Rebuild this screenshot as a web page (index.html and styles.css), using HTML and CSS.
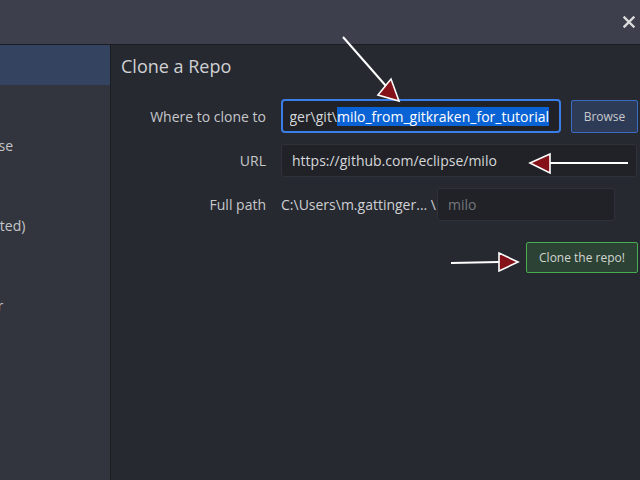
FILE: index.html
```html
<!DOCTYPE html>
<html>
<head>
<meta charset="utf-8">
<link rel="stylesheet" href="styles.css">
</head>
<body>
<div class="app">
  <div class="header">
    <svg class="close" width="12" height="12" viewBox="0 0 12 12"><path d="M1.5 1.5 L10.5 10.5 M10.5 1.5 L1.5 10.5" stroke="#dcdcdc" stroke-width="2.4" stroke-linecap="square"/></svg>
  </div>
  <div class="body">
    <div class="sidebar">
      <div class="nav-item selected"><span class="nav-label">Clone with URL</span></div>
      <div class="nav-item"><span class="nav-label">GitHub.com</span></div>
      <div class="nav-item"><span class="nav-label">GitHub Enterprise</span></div>
      <div class="nav-item"><span class="nav-label">GitLab.com</span></div>
      <div class="nav-item"><span class="nav-label">GitLab (Self-Hosted)</span></div>
      <div class="nav-item"><span class="nav-label">Bitbucket.org</span></div>
      <div class="nav-item"><span class="nav-label">Bitbucket Server</span></div>
    </div>
    <div class="main">
      <h1 class="title">Clone a Repo</h1>
      <div class="form">
        <div class="label">Where to clone to</div>
        <div class="field-row">
          <div class="input focused">
            <div class="scroll"><span>ger\git\</span><span class="sel">milo_from_gitkraken_for_tutorial</span></div>
          </div>
          <button class="btn browse">Browse</button>
        </div>
        <div class="label">URL</div>
        <div class="field-row">
          <div class="input plain"><div class="scroll start"><span>https://github.com/eclipse/milo</span></div></div>
        </div>
        <div class="label">Full path</div>
        <div class="field-row">
          <span class="path">C:\Users\m.gattinger... \</span>
          <div class="input name"><div class="scroll start"><span class="ph">milo</span></div></div>
        </div>
      </div>
      <div class="actions">
        <button class="btn clone">Clone the repo!</button>
      </div>
    </div>
  </div>
  <svg class="arrows" width="640" height="480" viewBox="0 0 640 480">
    <g stroke="#ffffff" stroke-width="2" fill="none">
      <line x1="343" y1="37" x2="386" y2="86"/>
      <line x1="628" y1="163" x2="549" y2="163"/>
      <line x1="451" y1="263" x2="499" y2="262"/>
    </g>
    <g fill="#851218" stroke="#ffffff" stroke-width="1.6" stroke-linejoin="miter">
      <polygon points="378,95 391,79 399,101"/>
      <polygon points="530,163 550,154 550,173"/>
      <polygon points="518,262 499,253 499,271"/>
    </g>
  </svg>
</div>
</body>
</html>
```
FILE: styles.css
```css
* { box-sizing: border-box; }
html, body {
  margin: 0;
  padding: 0;
  width: 640px;
  height: 480px;
  overflow: hidden;
  background: #262930;
  font-family: "Open Sans", "Noto Sans", sans-serif;
}
.app {
  position: relative;
  width: 640px;
  height: 480px;
  display: flex;
  flex-direction: column;
}
.header {
  height: 45px;
  flex: none;
  background: #3d404c;
  border-bottom: 1px solid #1b1d21;
  display: flex;
  align-items: center;
  justify-content: flex-end;
  padding-right: 5px;
}
.close { display: block; margin-top: 0; }
.body {
  flex: 1;
  display: flex;
  min-height: 0;
}
.sidebar {
  width: 111px;
  flex: none;
  background: #32353e;
  border-right: 1px solid #1b1d21;
  overflow: hidden;
}
.nav-item {
  height: 40px;
  display: flex;
  align-items: center;
  white-space: nowrap;
  font-size: 14px;
  color: #c4c5c8;
}
.nav-item.selected { background: #344360; }
.nav-label { margin-left: -104px; }
.main {
  flex: 1;
  padding: 10px 2px 0 10px;
  color: #c8c9cc;
}
.title {
  margin: 0;
  font-size: 18px;
  font-weight: 400;
  line-height: 23px;
  color: #d0d1d4;
}
.form {
  margin-top: 21px;
  display: grid;
  grid-template-columns: 145px 1fr;
  column-gap: 15px;
  row-gap: 11px;
  align-items: center;
}
.label {
  text-align: right;
  font-size: 14px;
  color: #c6c7ca;
  line-height: 19px;
  white-space: nowrap;
}
.field-row {
  display: flex;
  align-items: center;
}
.input {
  height: 33px;
  background: #202227;
  border: 1px solid #2f323a;
  border-radius: 3px;
  display: flex;
  align-items: center;
  font-size: 14px;
  color: #d6d7da;
}
.input.focused {
  width: 280px;
  height: 34px;
  border: 2px solid #3a7de6;
  border-radius: 4px;
}
.input.plain { flex: 1; margin-right: 1px; }
.input.name { width: 178px; }
.scroll {
  flex: 1;
  margin: 0 10px 0 7px;
  overflow: hidden;
  display: flex;
  justify-content: flex-end;
  white-space: nowrap;
  line-height: 19px;
}
.scroll.start { justify-content: flex-start; margin-left: 10px; }
.sel { background: #0a63d4; color: #ffffff; }
.ph { color: #75777c; }
.path {
  font-size: 14px;
  color: #cfd0d3;
  white-space: nowrap;
  width: 156px;
  overflow: hidden;
}
.btn {
  font-family: "Open Sans", "Noto Sans", sans-serif;
  font-size: 12px;
  color: #c9cacd;
  border-radius: 2px;
  padding: 0;
  cursor: pointer;
}
.browse {
  margin-left: 10px;
  width: 67px;
  height: 33px;
  background: #2e3b57;
  border: 1px solid #3b6cc4;
}
.actions {
  display: flex;
  justify-content: flex-end;
  margin-top: 21px;
}
.clone {
  width: 112px;
  height: 31px;
  background: #2c4234;
  border: 1px solid #47ad4e;
  color: #d3d5d3;
}
.arrows {
  position: absolute;
  left: 0;
  top: 0;
  pointer-events: none;
}
```
